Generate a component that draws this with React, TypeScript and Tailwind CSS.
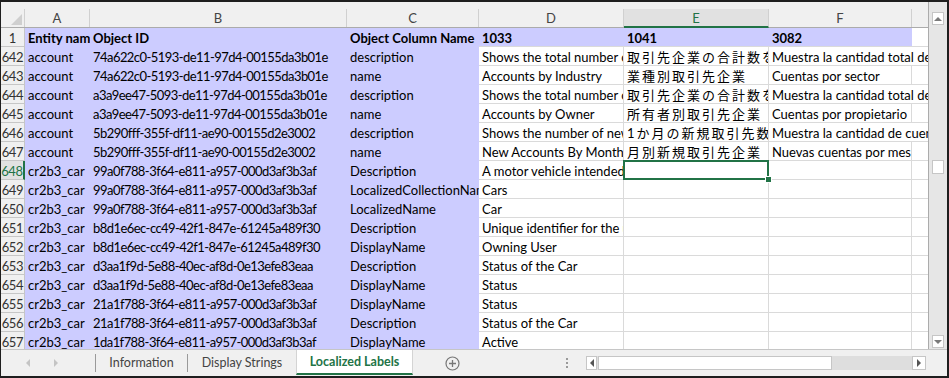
import React from "react";
import clsx from "clsx";

type Row = {
    n: string;
    a: string;
    b: string;
    c: string;
    d?: string;
    e?: string;
    f?: string;
    fOver?: boolean;
    sel?: boolean;
};

const rows: Row[] = [
    { n: "642", a: "account", b: "74a622c0-5193-de11-97d4-00155da3b01e", c: "description", d: "Shows the total number of accounts", e: "取引先企業の合計数を表示します", f: "Muestra la cantidad total de cuentas", fOver: true },
    { n: "643", a: "account", b: "74a622c0-5193-de11-97d4-00155da3b01e", c: "name", d: "Accounts by Industry", e: "業種別取引先企業", f: "Cuentas por sector" },
    { n: "644", a: "account", b: "a3a9ee47-5093-de11-97d4-00155da3b01e", c: "description", d: "Shows the total number of accounts", e: "取引先企業の合計数を表示します", f: "Muestra la cantidad total de cuentas", fOver: true },
    { n: "645", a: "account", b: "a3a9ee47-5093-de11-97d4-00155da3b01e", c: "name", d: "Accounts by Owner", e: "所有者別取引先企業", f: "Cuentas por propietario" },
    { n: "646", a: "account", b: "5b290fff-355f-df11-ae90-00155d2e3002", c: "description", d: "Shows the number of new accounts", e: "1か月の新規取引先数を表示します", f: "Muestra la cantidad de cuentas nuevas", fOver: true },
    { n: "647", a: "account", b: "5b290fff-355f-df11-ae90-00155d2e3002", c: "name", d: "New Accounts By Month", e: "月別新規取引先企業", f: "Nuevas cuentas por mes" },
    { n: "648", a: "cr2b3_car", b: "99a0f788-3f64-e811-a957-000d3af3b3af", c: "Description", d: "A motor vehicle intended for transport", sel: true },
    { n: "649", a: "cr2b3_car", b: "99a0f788-3f64-e811-a957-000d3af3b3af", c: "LocalizedCollectionName", d: "Cars" },
    { n: "650", a: "cr2b3_car", b: "99a0f788-3f64-e811-a957-000d3af3b3af", c: "LocalizedName", d: "Car" },
    { n: "651", a: "cr2b3_car", b: "b8d1e6ec-cc49-42f1-847e-61245a489f30", c: "Description", d: "Unique identifier for the user" },
    { n: "652", a: "cr2b3_car", b: "b8d1e6ec-cc49-42f1-847e-61245a489f30", c: "DisplayName", d: "Owning User" },
    { n: "653", a: "cr2b3_car", b: "d3aa1f9d-5e88-40ec-af8d-0e13efe83eaa", c: "Description", d: "Status of the Car" },
    { n: "654", a: "cr2b3_car", b: "d3aa1f9d-5e88-40ec-af8d-0e13efe83eaa", c: "DisplayName", d: "Status" },
    { n: "655", a: "cr2b3_car", b: "21a1f788-3f64-e811-a957-000d3af3b3af", c: "DisplayName", d: "Status" },
    { n: "656", a: "cr2b3_car", b: "21a1f788-3f64-e811-a957-000d3af3b3af", c: "Description", d: "Status of the Car" },
    { n: "657", a: "cr2b3_car", b: "1da1f788-3f64-e811-a957-000d3af3b3af", c: "DisplayName", d: "Active" },
];

const lav = "bg-[#ccccff] overflow-hidden whitespace-nowrap pl-[3px]";
const white = "bg-white border-r border-b border-[#dadada] overflow-hidden whitespace-nowrap pl-[3px]";

const Arrow = ({ dir, color = "#7a7a7a" }: { dir: "up" | "down" | "left" | "right"; color?: string }) => {
    const pts = {
        up: "0,5 4,1 8,5",
        down: "0,1 4,5 8,1",
        left: "5,0 1,4 5,8",
        right: "1,0 5,4 1,8",
    }[dir];
    const vert = dir === "up" || dir === "down";
    return (
        <svg width={vert ? 8 : 6} height={vert ? 6 : 8} viewBox={vert ? "0 0 8 6" : "0 0 6 8"}>
            <polygon points={pts} fill={color} />
        </svg>
    );
};

const HeaderRow = () => (
    <div className="flex h-[19px] shrink-0 bg-[#f0f0f0] border-b border-[#ababab] text-[13px] text-[#444] leading-[19px]">
        {/* corner */}
        <div className="w-[24px] border-r border-[#d0d0d0] relative">
            <svg className="absolute right-[2px] bottom-[2px]" width="11" height="11" viewBox="0 0 11 11">
                <polygon points="11,0 11,11 0,11" fill="#cfcfcf" />
            </svg>
        </div>
        <div className="w-[65px] border-r border-[#d0d0d0] text-center">A</div>
        <div className="w-[257px] border-r border-[#d0d0d0] text-center">B</div>
        <div className="w-[132px] border-r border-[#d0d0d0] text-center">C</div>
        <div className="w-[145px] border-r border-[#d0d0d0] text-center">D</div>
        <div className="w-[145px] border-r border-[#d0d0d0] text-center bg-[#e1e1e1] text-[#217346] border-b-2 border-b-[#217346] -mb-px">E</div>
        <div className="w-[143px] border-r border-[#d0d0d0] text-center">F</div>
        <div className="flex-1" />
    </div>
);

const TitleRow = () => (
    <div className="flex h-[19px] shrink-0 font-bold leading-[20px]">
        <div className="w-[24px] bg-[#f0f0f0] border-r border-b border-[#c6c6c6] text-center font-normal text-[#333]">1</div>
        <div className={clsx(lav, "w-[65px]")}>Entity name</div>
        <div className={clsx(lav, "w-[257px]")}>Object ID</div>
        <div className={clsx(lav, "w-[132px]")}>Object Column Name</div>
        <div className={clsx(lav, "w-[145px] border-b border-[#dadada]")}>1033</div>
        <div className={clsx(lav, "w-[145px] border-b border-[#dadada]")}>1041</div>
        <div className={clsx(lav, "w-[143px] border-b border-[#dadada]")}>3082</div>
        <div className="flex-1 bg-white border-b border-[#dadada]" />
    </div>
);

const DataRow = ({ r }: { r: Row }) => (
    <div className="flex h-[19px] shrink-0 leading-[20px]">
        <div
            className={clsx(
                "w-[24px] border-b border-[#c6c6c6] text-center tracking-[-0.3px]",
                r.sel ? "bg-[#e1e1e1] text-[#217346] border-r-2 border-r-[#217346]" : "bg-[#f0f0f0] text-[#333] border-r"
            )}
        >
            {r.n}
        </div>
        <div className={clsx(lav, "w-[65px]")}>{r.a}</div>
        <div className={clsx(lav, "w-[257px] tracking-[-0.55px]")}>{r.b}</div>
        <div className={clsx(lav, "w-[132px]")}>{r.c}</div>
        <div className={clsx(white, "w-[145px]")}>{r.d}</div>
        <div className={clsx(white, "w-[145px] relative overflow-visible")}>
            <div className="overflow-hidden text-[13px] tracking-[2px]">{r.e}</div>
            {r.sel && (
                <>
                    <div className="absolute -left-px -top-px w-[146px] h-[20px] border-2 border-[#217346]" />
                    <div className="absolute right-[-4px] bottom-[-4px] w-[7px] h-[7px] bg-[#217346] border border-white z-10" />
                </>
            )}
        </div>
        {r.fOver ? (
            <div className="w-[143px] bg-white border-b border-[#dadada] overflow-visible whitespace-nowrap pl-[3px] relative z-10">{r.f}</div>
        ) : (
            <div className={clsx(white, "w-[143px]")}>{r.f}</div>
        )}
        <div className="flex-1 border-b border-[#dadada]" />
    </div>
);

const VScroll = () => (
    <div className="w-[19px] bg-[#e6e6e6] border-l border-[#ababab] flex flex-col items-center pt-[10px] pb-px">
        <div className="w-[12px] h-[13px] bg-white border border-[#c6c6c6] flex items-center justify-center">
            <Arrow dir="up" />
        </div>
        <div className="w-[12px] h-[14px] bg-white border border-[#c6c6c6] mt-[135px]" />
        <div className="flex-1" />
        <div className="w-[12px] h-[13px] bg-white border border-[#c6c6c6] flex items-center justify-center">
            <Arrow dir="down" />
        </div>
    </div>
);

const Sep = () => <div className="w-px h-[18px] bg-[#9a9a9a]" />;

const TabBar = () => (
    <div className="h-[27px] shrink-0 flex items-center border-t border-[#c6c6c6] bg-[#f0f0f0] text-[12.5px] text-[#444]">
        <div className="w-[94px] flex items-center pl-[24px] gap-[22px]">
            <Arrow dir="left" color="#c4c4c4" />
            <Arrow dir="right" color="#c4c4c4" />
        </div>
        <Sep />
        <div className="w-[91px] text-center">Information</div>
        <Sep />
        <div className="w-[108px] text-center">Display Strings</div>
        <div className="w-[117px] h-[25px] self-start bg-white border-x border-[#d4d4d4] border-b-2 border-b-[#217346] text-center leading-[23px] font-bold text-[#217346]">
            Localized Labels
        </div>
        <div className="ml-[32px] w-[15px] h-[15px]">
            <svg width="15" height="15" viewBox="0 0 15 15">
                <circle cx="7.5" cy="7.5" r="6.5" fill="none" stroke="#777" strokeWidth="1.2" />
                <path d="M7.5 4v7M4 7.5h7" stroke="#777" strokeWidth="1.3" />
            </svg>
        </div>
        <div className="ml-[106px] flex flex-col gap-[2px]">
            <div className="w-[2px] h-[2px] bg-[#9a9a9a]" />
            <div className="w-[2px] h-[2px] bg-[#9a9a9a]" />
            <div className="w-[2px] h-[2px] bg-[#9a9a9a]" />
        </div>
        <div className="ml-[18px] flex items-center h-[14px] w-[340px] bg-[#dedede]">
            <div className="w-[11px] h-[14px] bg-white border border-[#c6c6c6] flex items-center justify-center">
                <Arrow dir="left" color="#555" />
            </div>
            <div className="w-[234px] h-[14px] bg-white border border-[#c6c6c6] ml-px" />
            <div className="flex-1" />
            <div className="w-[14px] h-[14px] bg-white border border-[#c6c6c6] flex items-center justify-center">
                <Arrow dir="right" color="#555" />
            </div>
        </div>
    </div>
);

export default function App() {
    return (
        <div
            className="w-[949px] h-[378px] bg-[#f0f0f0] border-t-2 border-l border-r-2 border-b-2 border-[#1e1e1e] flex flex-col overflow-hidden text-[13px] text-black"
            style={{ fontFamily: "Lato, 'Noto Sans CJK JP', sans-serif" }}
        >
            <div className="flex h-[347px] shrink-0">
                <div className="w-[927px] flex flex-col overflow-hidden bg-white">
                    <div className="h-[7px] shrink-0 bg-[#f0f0f0]" />
                    <HeaderRow />
                    <TitleRow />
                    {rows.map((r) => (
                        <DataRow key={r.n} r={r} />
                    ))}
                </div>
                <VScroll />
            </div>
            <TabBar />
        </div>
    );
}
